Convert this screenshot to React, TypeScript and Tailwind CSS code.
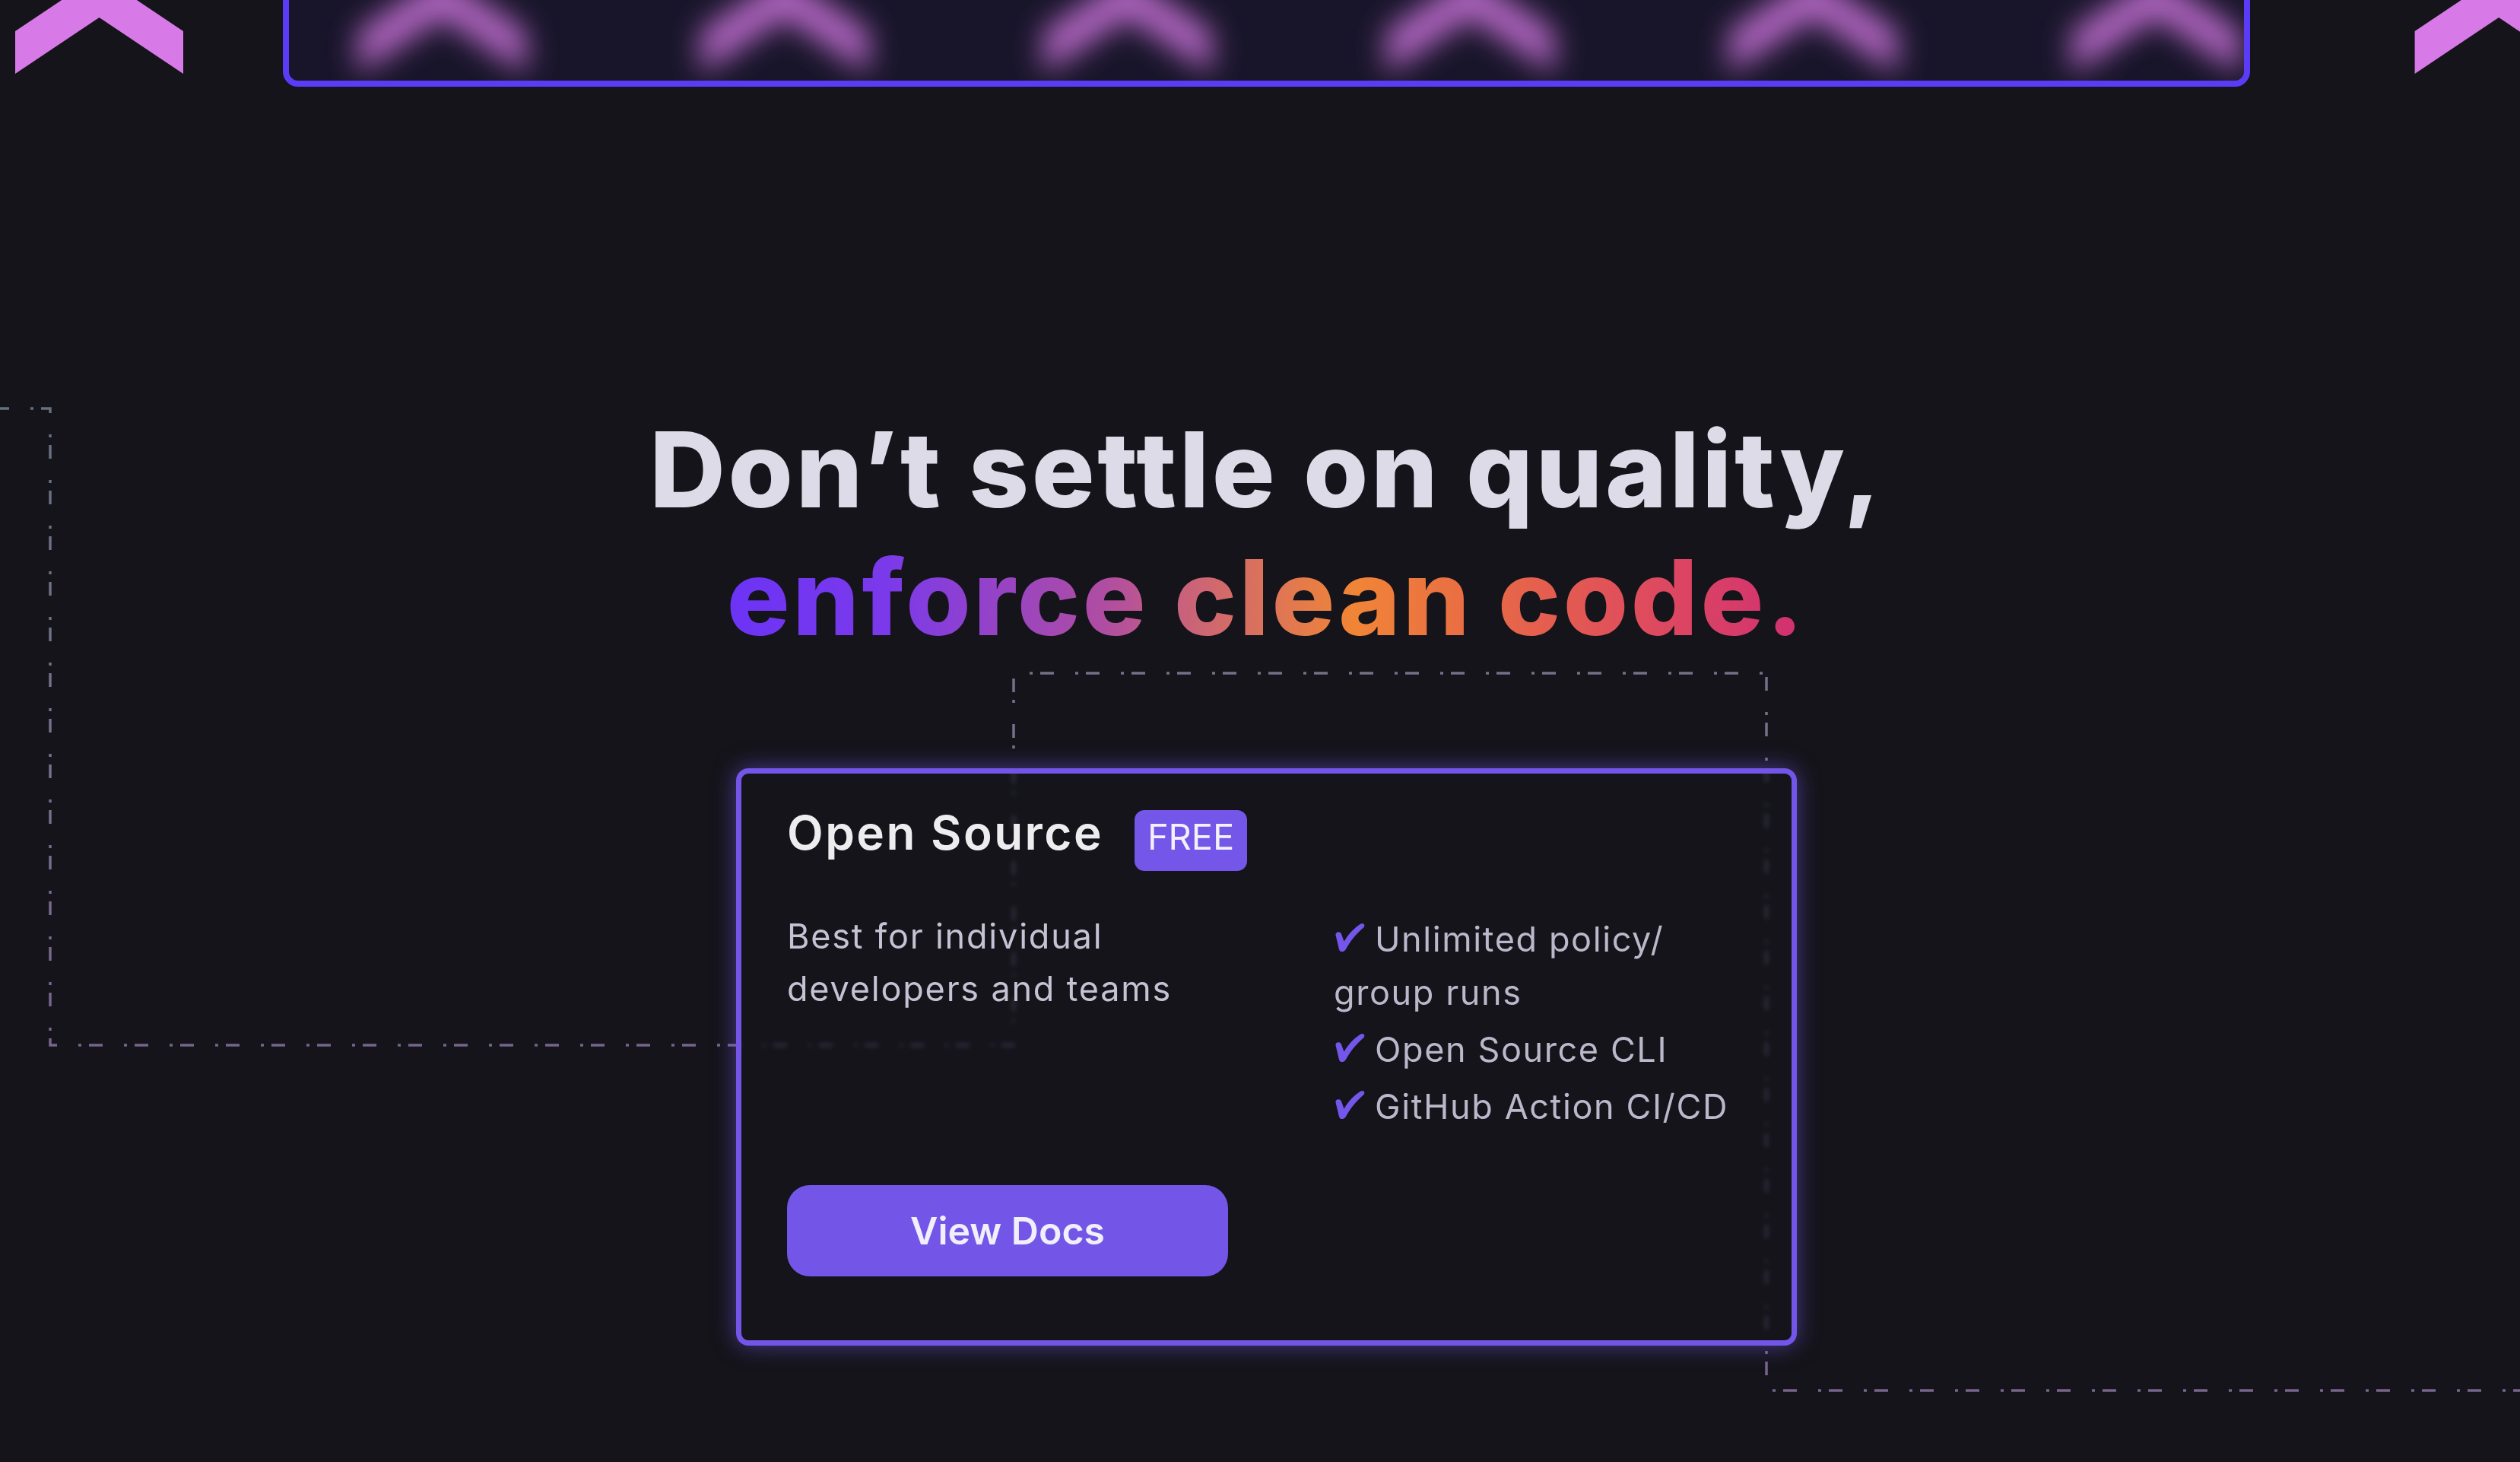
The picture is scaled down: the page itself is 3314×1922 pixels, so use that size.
import React from "react";

const chevronCenters = Array.from({ length: 8 }, (_, k) => 130.5 + 450.8 * k);

function chevronPoints(cx: number) {
  return `${cx - 110.5},41 ${cx},-33 ${cx + 110.5},41 ${cx + 110.5},97 ${cx},23 ${cx - 110.5},97`;
}

function Chevrons() {
  return (
    <svg
      className="absolute left-0 top-0"
      width={3314}
      height={130}
      viewBox="0 0 3314 130"
      aria-hidden="true"
    >
      {chevronCenters.map((cx) => (
        <polygon key={cx} fill="#d779e6" points={chevronPoints(cx)} />
      ))}
    </svg>
  );
}

function BlurredChevrons() {
  return (
    <svg
      className="absolute left-[-380px] top-[-8px]"
      width={3314}
      height={200}
      viewBox="0 -40 3314 200"
      aria-hidden="true"
    >
      <defs>
        <filter id="soft" x="-50%" y="-100%" width="200%" height="300%">
          <feGaussianBlur stdDeviation="19" />
        </filter>
      </defs>
      <g filter="url(#soft)" opacity={0.82}>
        {chevronCenters.map((cx) => (
          <polygon key={cx} fill="#d779e6" points={chevronPoints(cx)} />
        ))}
      </g>
    </svg>
  );
}

function DashedTrace() {
  return (
    <svg
      className="absolute left-0 top-0"
      width={3314}
      height={1922}
      viewBox="0 0 3314 1922"
      aria-hidden="true"
    >
      <defs>
        <linearGradient id="trace" gradientUnits="userSpaceOnUse" x1="0" y1="537" x2="0" y2="1400">
          <stop offset="0" stopColor="#66707d" />
          <stop offset="0.55" stopColor="#76718c" />
          <stop offset="1" stopColor="#77638c" />
        </linearGradient>
      </defs>
      <path
        d="M-20 537 H66 V1374 H1333 V885 H2323 V1828 H3340"
        fill="none"
        stroke="url(#trace)"
        strokeWidth={3.5}
        strokeDasharray="4 10 18 28"
      />
    </svg>
  );
}

function Check() {
  return (
    <svg
      className="inline-block mr-[13px] align-baseline"
      width={41}
      height={39}
      viewBox="0 0 40 38"
      aria-hidden="true"
    >
      <path
        fill="#7556ea"
        d="M2.5 17 C2 14.5 4 13 6 13 C8 13 9.3 14 10 16 L13.2 25 C19 15 26 8 34.5 2.5 C36.5 1.2 39 2 39.3 4 C39.5 5.5 38.8 6.5 37.8 7.5 C28 16 21 25 15.5 35 C14.5 37 12.5 38 10.5 38 C8.5 38 7.3 37 6.8 35 Z"
      />
    </svg>
  );
}

export default function App() {
  return (
    <div className="relative min-h-screen w-full overflow-hidden bg-[#14141a] font-['Inter','Noto_Sans',sans-serif]">
      <Chevrons />
      <DashedTrace />

      <div className="relative flex flex-col items-center pl-[17px]">
        {/* frosted top banner */}
        <div className="relative mt-[-40px] h-[154px] w-[2587px] overflow-hidden rounded-[20px] border-[8px] border-[#5b3cf6] bg-[#18152a]">
          <BlurredChevrons />
        </div>

        {/* headline */}
        <h1 className="mt-[419px] text-center text-[138px] font-extrabold leading-[168px] tracking-[3.6px]">
          <span className="block text-[#dddbe8]">Don’t settle on quality,</span>
          <span className="inline-block bg-[linear-gradient(90deg,#6c33f6_0%,#7b3aea_15%,#b04da2_35%,#c8617c_42%,#f08536_58%,#e86a46_70%,#dc4662_88%,#d02f72_100%)] bg-clip-text text-transparent">
            enforce clean code.
          </span>
        </h1>

        {/* pricing card */}
        <div className="mt-[141px] flex h-[759px] w-[1395px] flex-col rounded-[16px] border-[7px] border-[#7356e8] bg-[#14141a]/60 px-[60px] pt-[48px] pb-[84px] shadow-[0_0_30px_rgba(116,87,232,0.55)] backdrop-blur-[3px]">
          <div className="flex items-baseline">
            <h2 className="text-[62px] font-semibold leading-[60px] tracking-[2.5px] text-[#ededf0]">Open Source</h2>
            <span className="ml-[41px] flex h-[80px] w-[148px] justify-center rounded-[13px] bg-[#7456e8] pt-[11px] pb-[22px] text-[47px] leading-[47px] text-[#f3f1fb]">
              FREE
            </span>
          </div>

          <div className="mt-[51px] flex">
            <p className="w-[719px] text-[45px] leading-[69px] tracking-[1.8px] text-[#c6c2d3]">
              Best for individual
              <br />
              developers and teams
            </p>
            <ul className="mt-[4px] flex flex-col gap-[5px] whitespace-nowrap text-[45px] leading-[70px] tracking-[1.6px] text-[#bcb8cb]">
              <li>
                <Check />
                Unlimited policy/
                <br />
                group runs
              </li>
              <li>
                <Check />
                Open Source CLI
              </li>
              <li>
                <Check />
                GitHub Action CI/CD
              </li>
            </ul>
          </div>

          <button className="mt-auto flex h-[120px] w-[580px] items-center justify-center rounded-[30px] bg-[#7356e8] text-[50px] font-semibold text-[#f1effa]">
            View Docs
          </button>
        </div>
      </div>
    </div>
  );
}
